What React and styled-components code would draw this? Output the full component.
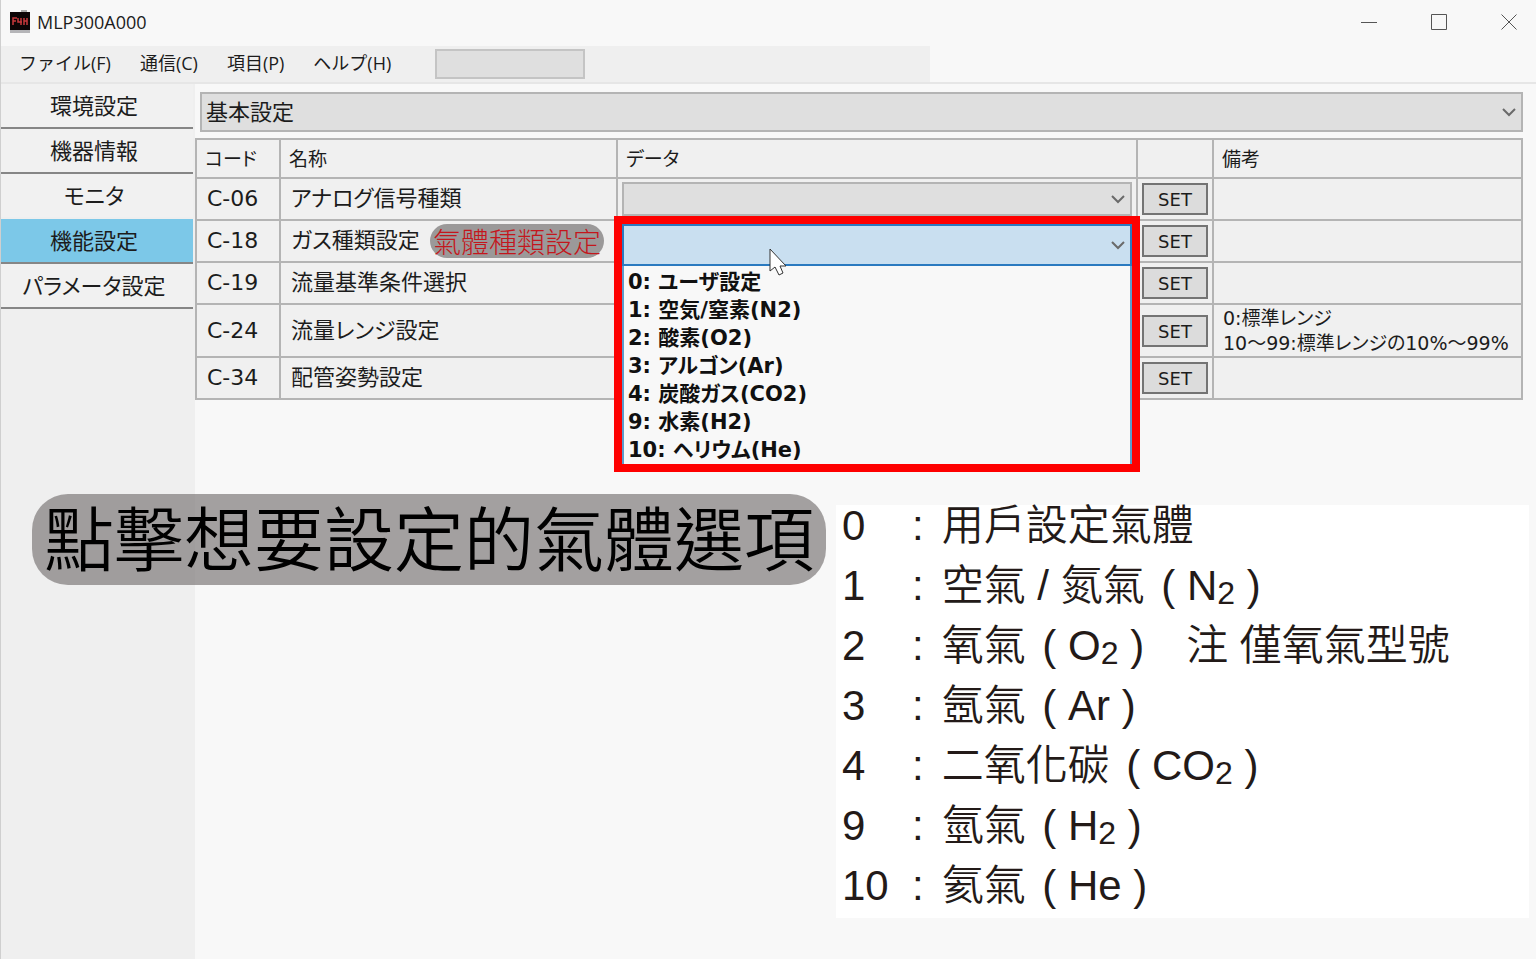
import React, { useState } from 'react'
import styled, { createGlobalStyle } from 'styled-components'

const GlobalStyle = createGlobalStyle`
  * { box-sizing: border-box; }
  body {
    margin: 0;
    background: #f8f8f8;
    color: #1c1c1c;
    font-family: 'DejaVu Sans', 'Noto Sans CJK JP', sans-serif;
    font-size: 22px;
  }
  button, input, select { font: inherit; color: inherit; }
`

const Window = styled.div`
  position: relative;
  display: flex;
  flex-direction: column;
  min-height: 100vh;
  border-left: 1px solid #cfcfcf;
`

const TitleBar = styled.header`
  display: flex;
  align-items: center;
  height: 46px;
  padding: 0 4px 2px 8px;
`

const Title = styled.h1`
  flex: 1;
  margin: 0 0 0 7px;
  font-family: 'Open Sans', sans-serif;
  font-weight: 400;
  font-size: 18px;
`

const WindowButtons = styled.div`
  display: flex;
  gap: 24px;
`

const WindowButton = styled.button`
  display: flex;
  align-items: center;
  justify-content: center;
  width: 46px;
  height: 32px;
  padding: 0;
  border: 0;
  background: none;
`

const MenuRow = styled.div`
  display: flex;
  height: 38px;
  border-bottom: 2px solid #e6e6e6;
`

const Menu = styled.nav`
  display: flex;
  align-items: center;
  gap: 29px;
  width: 929px;
  padding: 0 18px;
  background: #efefef;
`

const MenuButton = styled.button`
  padding: 0 0 2px;
  border: 0;
  background: none;
  font-family: 'Open Sans', 'Noto Sans CJK JP', sans-serif;
  font-size: 18px;
  line-height: 28px;
`

const StatusBox = styled.input`
  width: 150px;
  height: 30px;
  margin-left: 15px;
  border: 2px solid #c4c4c4;
  background: #dfdfdf;
`

const Body = styled.div`
  display: flex;
  flex: 1;
`

const SideBar = styled.nav`
  display: flex;
  flex-direction: column;
  flex: 0 0 194px;
  background: #efefef;
`

const SideButton = styled.button`
  height: 45px;
  margin-right: 2px;
  padding: 0 6px 4px 0;
  border: 0;
  border-bottom: 2px solid ${p => (p.$plain ? '#efefef' : '#868686')};
  background: ${p => (p.$active ? '#7cc8e8' : '#f1f1f1')};
  font-feature-settings: 'palt';
`

const Content = styled.main`
  display: flex;
  flex-direction: column;
  flex: 1;
  min-width: 0;
  padding: 8px 7px 0 0;
`

const SelectWrap = styled.div`
  display: flex;
  align-items: center;
  position: relative;
  height: ${p => p.$height}px;
  margin: ${p => p.$margin || '0'};
  svg {
    position: absolute;
    right: 6px;
    pointer-events: none;
  }
`

const Select = styled.select`
  appearance: none;
  width: 100%;
  height: 100%;
  padding: 0 4px;
  border: 2px solid ${p => (p.$open ? '#2a7ac0' : '#b4b4b4')};
  border-radius: 0;
  outline: 0;
  background: ${p => (p.$open ? '#c9dff0' : '#dfdfdf')};
`

const Table = styled.table`
  width: calc(100% - 6px);
  table-layout: fixed;
  border-collapse: collapse;
  background: #f0f0f0;
  font-feature-settings: 'palt';
`

const Col = styled.col`
  width: ${p => p.$width}px;
`

const Row = styled.tr`
  height: ${p => (p.$tall ? 53 : 42)}px;
`

const HeadCell = styled.th`
  height: 39px;
  padding: 0 8px;
  border: 2px solid #b4b4b4;
  font-weight: 400;
  font-size: 19px;
  line-height: 24px;
  text-align: left;
`

const Cell = styled.td`
  position: relative;
  padding: 0 ${p => p.$side ?? 10}px;
  border: 2px solid #b4b4b4;
  line-height: 30px;
`

const Remark = styled(Cell)`
  padding: 0 9px;
  font-size: 19px;
  line-height: 25px;
  white-space: pre;
`

const Name = styled.div`
  display: flex;
  align-items: center;
  justify-content: space-between;
`

const Tag = styled.span`
  margin-right: 2px;
  padding: 0 3px;
  border-radius: 17px;
  background: #9b9999;
  color: #c4161c;
  font-family: 'Noto Sans CJK TC', sans-serif;
  font-weight: 300;
  font-size: 28px;
  line-height: 34px;
`

const SetButton = styled.button`
  display: block;
  width: 66px;
  height: 32px;
  margin: 0 auto;
  padding: 0;
  border: 2px solid #747474;
  background: #dcdcdc;
  font-size: 18px;
`

const DropDown = styled.div`
  position: absolute;
  z-index: 1;
  top: -5px;
  left: -4px;
  right: -4px;
  border: 8px solid #fe0000;
  background: #f8f8f8;
`

const Options = styled.ul`
  margin: 0;
  padding: 2px 4px 0;
  border: 1px solid #5c9ccc;
  border-width: 0 2px;
  list-style: none;
  font-weight: 700;
  font-size: 21px;
  line-height: 28px;
  color: #101010;
`

const Cursor = styled.svg`
  position: absolute;
  top: 24px;
  left: 147px;
`

const Banner = styled.p`
  position: absolute;
  top: 494px;
  left: 31px;
  margin: 0;
  padding: 0 12px 8px;
  border-radius: 36px;
  background: rgba(122, 118, 118, .68);
  color: #000;
  font-family: 'Noto Sans CJK TC', sans-serif;
  font-weight: 350;
  font-size: 70px;
  line-height: 83px;
  white-space: nowrap;
`

const Notes = styled.dl`
  display: grid;
  grid-template-columns: 70px 1fr;
  row-gap: 18px;
  align-self: flex-end;
  width: 693px;
  margin: 105px 0 40px;
  padding: 0 0 11px 6px;
  background: #fff;
  color: #231a18;
  font-family: 'Liberation Sans', 'Noto Sans CJK TC', sans-serif;
  font-weight: 350;
  font-size: 42px;
  line-height: 42px;
`

const NoteKey = styled.dt`
  height: 42px;
`

const NoteText = styled.dd`
  display: flex;
  gap: 18px;
  height: 42px;
  margin: 0;
  white-space: pre;
`

const Formula = styled.span`
  margin-left: 5px;
`

const Sub = styled.sub`
  font-size: 32px;
  line-height: 0;
  vertical-align: -4px;
`

const Chevron = () => (
  <svg width="16" height="16" viewBox="0 0 16 16" fill="none" stroke="#6a6a6a" strokeWidth="2">
    <path d="M2 5l6 6 6-6" />
  </svg>
)

const AppIcon = () => (
  <svg width="21" height="24" viewBox="0 0 21 24">
    <path d="M12 0h6v3h-6z" fill="#aaa" />
    <path d="M1 2h20v18H1z" fill="#0c0506" />
    <path d="M1 20h20v3H1z" fill="#b5b5b8" />
    <path d="M4 15V8h4M4 11h3M9 8v4h4M12 8v7M15 8v7M18 8v7M15 11h3" fill="none" stroke="#c8393c" strokeWidth="1.5" />
  </svg>
)

const menus = ['ファイル(F)', '通信(C)', '項目(P)', 'ヘルプ(H)']
const pages = ['環境設定', '機器情報', 'モニタ', '機能設定', 'パラメータ設定']

const settings = [
  { code: 'C-06', name: 'アナログ信号種類' },
  { code: 'C-18', name: 'ガス種類設定', tag: '氣體種類設定', open: true },
  { code: 'C-19', name: '流量基準条件選択' },
  { code: 'C-24', name: '流量レンジ設定', remark: '0:標準レンジ\n10〜99:標準レンジの10%〜99%' },
  { code: 'C-34', name: '配管姿勢設定' },
]

const gases = [
  '0: ユーザ設定',
  '1: 空気/窒素(N2)',
  '2: 酸素(O2)',
  '3: アルゴン(Ar)',
  '4: 炭酸ガス(CO2)',
  '9: 水素(H2)',
  '10: ヘリウム(He)',
]

const notes = [
  ['0', '用戶設定氣體'],
  ['1', <>空氣 / 氮氣<Formula> ( N<Sub>2</Sub> )</Formula></>],
  ['2', <>氧氣<Formula> ( O<Sub>2</Sub> )</Formula>　注 僅氧氣型號</>],
  ['3', <>氬氣<Formula> ( Ar )</Formula></>],
  ['4', <>二氧化碳<Formula> ( CO<Sub>2</Sub> )</Formula></>],
  ['9', <>氫氣<Formula> ( H<Sub>2</Sub> )</Formula></>],
  ['10', <>氦氣<Formula> ( He )</Formula></>],
]

const GasDropDown = () => (
  <DropDown>
    <SelectWrap $height={42}>
      <Select $open aria-label="ガス種類設定" />
      <Chevron />
    </SelectWrap>
    <Options role="listbox" aria-label="ガス種類">
      {gases.map(gas => <li key={gas} role="option" aria-selected="false">{gas}</li>)}
    </Options>
    <Cursor width="19" height="28" viewBox="0 0 19 28">
      <path d="M1 1v22l5-4 4 8 4-2-3-7h6z" fill="#fff" stroke="#333" />
    </Cursor>
  </DropDown>
)

const App = () => {
  const [page, setPage] = useState('機能設定')
  return (
    <>
      <GlobalStyle />
      <Window>
        <TitleBar>
          <AppIcon />
          <Title>MLP300A000</Title>
          <WindowButtons>
            <WindowButton aria-label="最小化">
              <svg width="16" height="16" stroke="#555"><path d="M0 8.500h16" /></svg>
            </WindowButton>
            <WindowButton aria-label="最大化">
              <svg width="16" height="16" fill="none" stroke="#555"><path d="M.5.500h15v15H.5z" /></svg>
            </WindowButton>
            <WindowButton aria-label="閉じる">
              <svg width="16" height="16" stroke="#555"><path d="M.5.500l15 15M15.500.500l-15 15" /></svg>
            </WindowButton>
          </WindowButtons>
        </TitleBar>
        <MenuRow>
          <Menu>
            {menus.map(menu => <MenuButton key={menu}>{menu}</MenuButton>)}
            <StatusBox aria-label="状態" readOnly />
          </Menu>
        </MenuRow>
        <Body>
          <SideBar>
            {pages.map(name => (
              <SideButton
                key={name}
                $active={name === page}
                $plain={name === 'モニタ'}
                onClick={() => setPage(name)}
              >
                {name}
              </SideButton>
            ))}
          </SideBar>
          <Content>
            <SelectWrap $height={40} $margin="0 6px 6px 5px">
              <Select aria-label="設定グループ">
                <option>基本設定</option>
              </Select>
              <Chevron />
            </SelectWrap>
            <Table>
              <colgroup>
                <Col $width={84} />
                <Col $width={337} />
                <Col $width={520} />
                <Col $width={76} />
                <col />
              </colgroup>
              <thead>
                <tr>
                  <HeadCell>コード</HeadCell>
                  <HeadCell>名称</HeadCell>
                  <HeadCell>データ</HeadCell>
                  <HeadCell />
                  <HeadCell>備考</HeadCell>
                </tr>
              </thead>
              <tbody>
                {settings.map(({ code, name, tag, open, remark }) => (
                  <Row key={code} $tall={!!remark}>
                    <Cell>{code}</Cell>
                    <Cell>
                      <Name>
                        {name}
                        {tag ? <Tag>{tag}</Tag> : null}
                      </Name>
                    </Cell>
                    <Cell $side={4}>
                      {open
                        ? <GasDropDown />
                        : (
                          <SelectWrap $height={34}>
                            <Select aria-label={name} />
                            <Chevron />
                          </SelectWrap>
                        )}
                    </Cell>
                    <Cell $side={4}>
                      <SetButton>SET</SetButton>
                    </Cell>
                    <Remark>{remark}</Remark>
                  </Row>
                ))}
              </tbody>
            </Table>
            <Notes>
              {notes.map(([key, text]) => (
                <React.Fragment key={key}>
                  <NoteKey>{key}</NoteKey>
                  <NoteText>
                    <span>:</span>
                    <span>{text}</span>
                  </NoteText>
                </React.Fragment>
              ))}
            </Notes>
          </Content>
        </Body>
        <Banner>點擊想要設定的氣體選項</Banner>
      </Window>
    </>
  )
}

export default App
